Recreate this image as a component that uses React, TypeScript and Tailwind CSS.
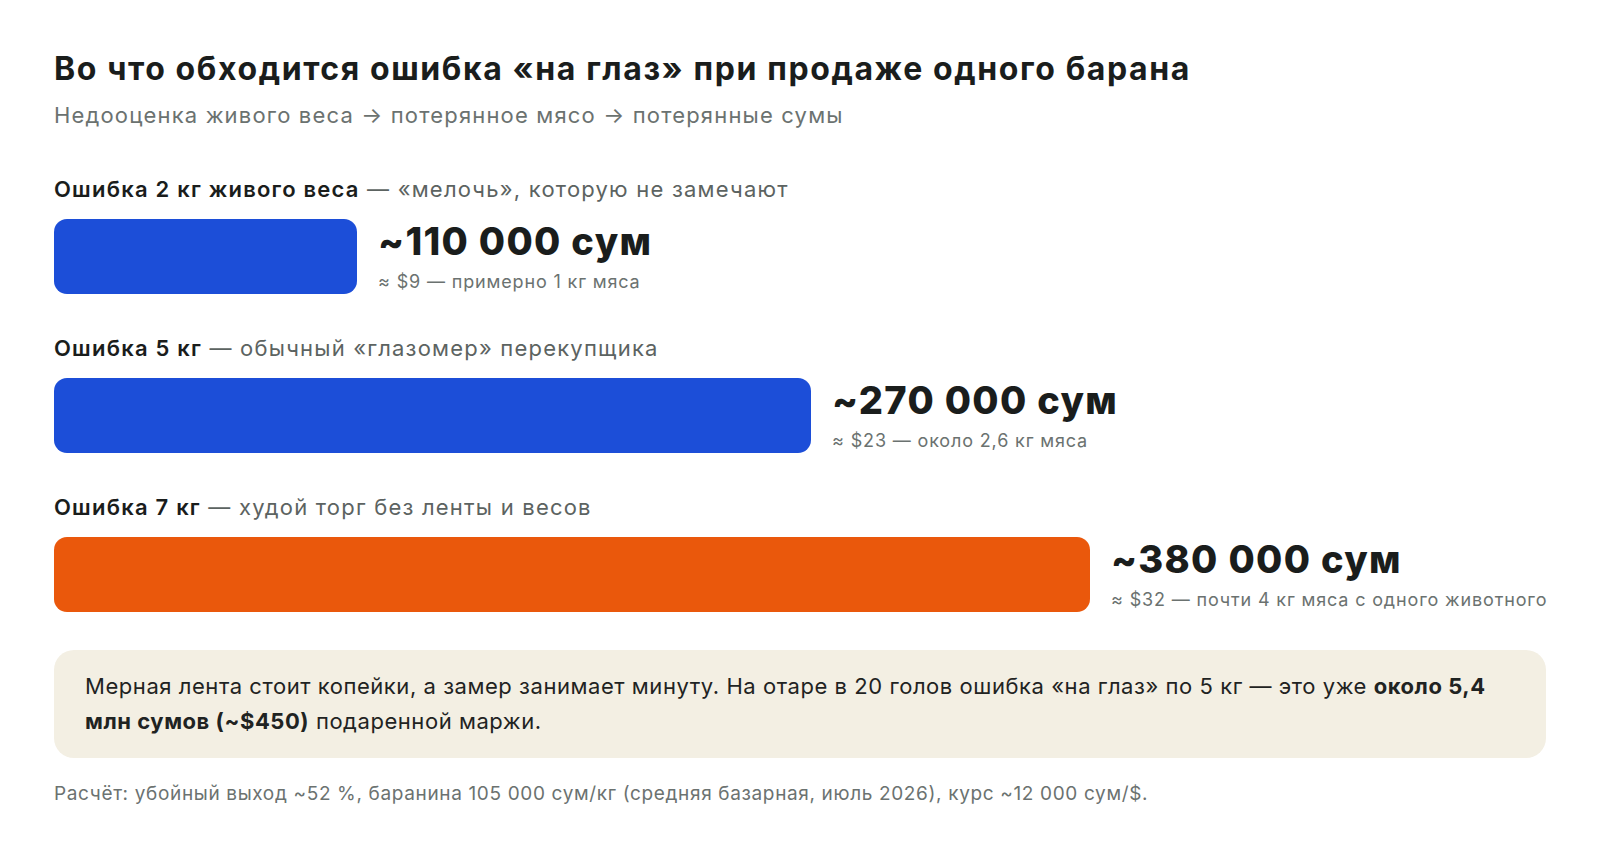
const rows = [
  {
    label: "Ошибка 2 кг живого веса",
    note: "«мелочь», которую не замечают",
    width: "w-[303px]",
    color: "bg-[#1c4ed8]",
    value: "~110 000 сум",
    sub: "≈ $9 — примерно 1 кг мяса",
  },
  {
    label: "Ошибка 5 кг",
    note: "обычный «глазомер» перекупщика",
    width: "w-[757px]",
    color: "bg-[#1c4ed8]",
    value: "~270 000 сум",
    sub: "≈ $23 — около 2,6 кг мяса",
  },
  {
    label: "Ошибка 7 кг",
    note: "худой торг без ленты и весов",
    width: "w-[1036px]",
    color: "bg-[#ea580c]",
    value: "~380 000 сум",
    sub: "≈ $32 — почти 4 кг мяса с одного животного",
  },
];

function LossRow({ row }: { row: (typeof rows)[number] }) {
  return (
    <div className="mt-[39px] first:mt-0">
      <p className="text-[22px] leading-[30px] tracking-[0.055em] text-[#5c6361]">
        <span className="font-semibold text-[#1a1d1c]">{row.label}</span> — {row.note}
      </p>
      <div className="mt-[15px] flex items-center gap-[21px]">
        <div className={`h-[75px] shrink-0 rounded-[13px] ${row.width} ${row.color}`} />
        <div className="flex flex-col whitespace-nowrap">
          <span className="text-[38px] font-extrabold leading-[44px] tracking-[0.035em] text-[#1a1d1c]">
            {row.value}
          </span>
          <span className="mt-[7px] text-[18px] leading-[24px] tracking-[0.047em] text-[#6b7270]">{row.sub}</span>
        </div>
      </div>
    </div>
  );
}

export default function App() {
  return (
    <div className="min-h-screen bg-white px-[54px] pt-[49px] font-['Inter','Noto_Sans',sans-serif]">
      <h1 className="text-[32px] font-bold leading-[40px] tracking-[0.05em] text-[#1a1d1c]">
        Во что обходится ошибка «на глаз» при продаже одного барана
      </h1>
      <p className="mt-[11px] text-[22px] leading-[30px] tracking-[0.053em] text-[#6b7270]">
        Недооценка живого веса → потерянное мясо → потерянные сумы
      </p>

      <div className="mt-[44px]">
        {rows.map((row) => (
          <LossRow key={row.value} row={row} />
        ))}
      </div>

      <div className="mt-[38px] rounded-[20px] bg-[#f3efe3] px-[31px] py-[19px]">
        <p className="text-[22px] leading-[35px] tracking-[0.025em] text-[#1f2322]">
          Мерная лента стоит копейки, а замер занимает минуту. На отаре в 20 голов ошибка «на глаз» по 5 кг — это уже{" "}
          <strong className="font-bold">около 5,4 млн сумов (~$450)</strong> подаренной маржи.
        </p>
      </div>

      <p className="mt-[22px] text-[19px] leading-[28px] tracking-[0.034em] text-[#6b7270]">
        Расчёт: убойный выход ~52 %, баранина 105 000 сум/кг (средняя базарная, июль 2026), курс ~12 000 сум/$.
      </p>
    </div>
  );
}
